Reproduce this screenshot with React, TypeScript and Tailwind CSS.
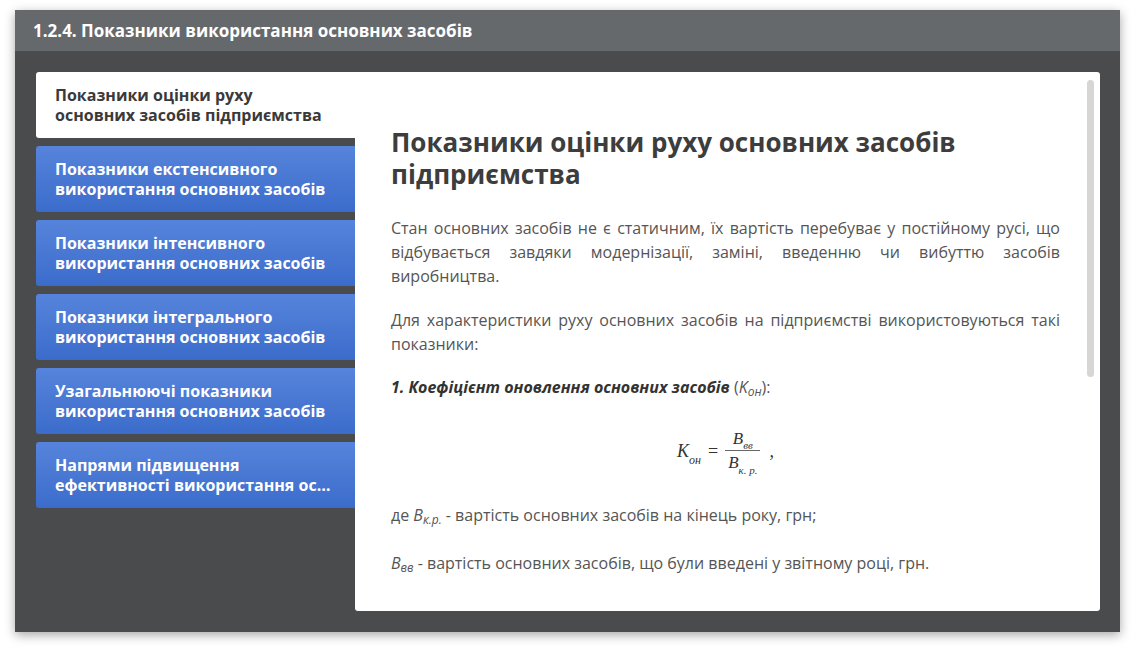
import React, { useState } from 'react';

// each tab is written as its two visible lines
const tabs: [string, string][] = [
  ['Показники оцінки руху', 'основних засобів підприємства'],
  ['Показники екстенсивного', 'використання основних засобів'],
  ['Показники інтенсивного', 'використання основних засобів'],
  ['Показники інтегрального', 'використання основних засобів'],
  ['Узагальнюючі показники', 'використання основних засобів'],
  ['Напрями підвищення', 'ефективності використання основних засобів'],
];

const Formula: React.FC = () => (
  <div className="flex h-[64px] items-center justify-center font-['Liberation_Serif',serif] italic text-[#333]">
    <span className="text-[18px]">
      K<sub className="text-[12px] align-[-4px]">он</sub>
    </span>
    <span className="mx-[7px] not-italic text-[18px]">=</span>
    <span className="flex flex-col items-center">
      <span className="px-[3px] text-[17px] leading-[22px]">
        B<sub className="text-[11px] align-[-3px]">вв</sub>
      </span>
      <span className="h-px w-full bg-[#666]" />
      <span className="px-[3px] text-[17px] leading-[24px]">
        B<sub className="text-[11px] align-[-4px]">к. р.</sub>
      </span>
    </span>
    <span className="ml-[9px] text-[18px]">,</span>
  </div>
);

export default function App() {
  const [active, setActive] = useState(0);

  return (
    <div className="min-h-screen bg-white pl-[15px] pt-[10px] font-['Open_Sans',sans-serif]">
      <div className="flex h-[622px] w-[1105px] flex-col bg-[#4a4b4d] shadow-[0_3px_10px_rgba(0,0,0,0.35)]">
        <div className="flex h-[41px] shrink-0 items-center bg-[#66696c] px-[18px] text-[17px] font-bold text-white">
          1.2.4. Показники використання основних засобів
        </div>

        <div className="flex flex-1 px-[21px] pb-[21px] pt-[21px] pr-[20px]">
          <div className="flex w-[319px] shrink-0 flex-col gap-[8px]">
            {tabs.map((t, i) => (
              <button
                key={i}
                onClick={() => setActive(i)}
                className={
                  i === active
                    ? 'flex h-[66px] flex-col justify-center rounded-l-[3px] bg-white pl-[19px] pr-[22px] text-left text-[16px] font-bold leading-[20px] text-[#3a3a3a]'
                    : 'flex h-[66px] flex-col justify-center rounded-l-[3px] bg-gradient-to-b from-[#5684dc] to-[#3c6ccb] pl-[19px] pr-[22px] text-left text-[16px] font-bold leading-[20px] text-white'
                }
              >
                <span className="block w-full truncate">{t[0]}</span>
                <span className="block w-full truncate">{t[1]}</span>
              </button>
            ))}
          </div>

          <div className="relative flex-1 overflow-hidden rounded-r-[3px] rounded-bl-[3px] bg-white">
            <div className="absolute right-[6px] top-[8px] h-[297px] w-[7px] rounded-full bg-[#d6d6d6]" />
            <div className="pl-[36px] pr-[40px] pt-[54px] text-[16px] leading-[24px] text-[#555]">
              <h2 className="text-[26px] font-bold leading-[32px] text-[#3d3d3d]">
                Показники оцінки руху основних засобів підприємства
              </h2>
              <p className="mt-[26px] text-justify">
                Стан основних засобів не є статичним, їх вартість перебуває у постійному русі, що
                відбувається завдяки модернізації, заміні, введенню чи вибуттю засобів виробництва.
              </p>
              <p className="mt-[20px] text-justify">
                Для характеристики руху основних засобів на підприємстві використовуються такі показники:
              </p>
              <p className="mt-[19px] text-[#333]">
                <b className="italic">1. Коефіцієнт оновлення основних засобів</b>{' '}
                <span className="text-[#555]">
                  (<i>K<sub className="text-[12px]">он</sub></i>):
                </span>
              </p>
              <div className="mt-[20px]">
                <Formula />
              </div>
              <p className="mt-[20px]">
                де <i>B<sub className="text-[12px]">к.р.</sub></i> - вартість основних засобів на кінець року, грн;
              </p>
              <p className="mt-[24px]">
                <i>B<sub className="text-[12px]">вв</sub></i> - вартість основних засобів, що були введені у звітному році, грн.
              </p>
            </div>
          </div>
        </div>
      </div>
    </div>
  );
}
